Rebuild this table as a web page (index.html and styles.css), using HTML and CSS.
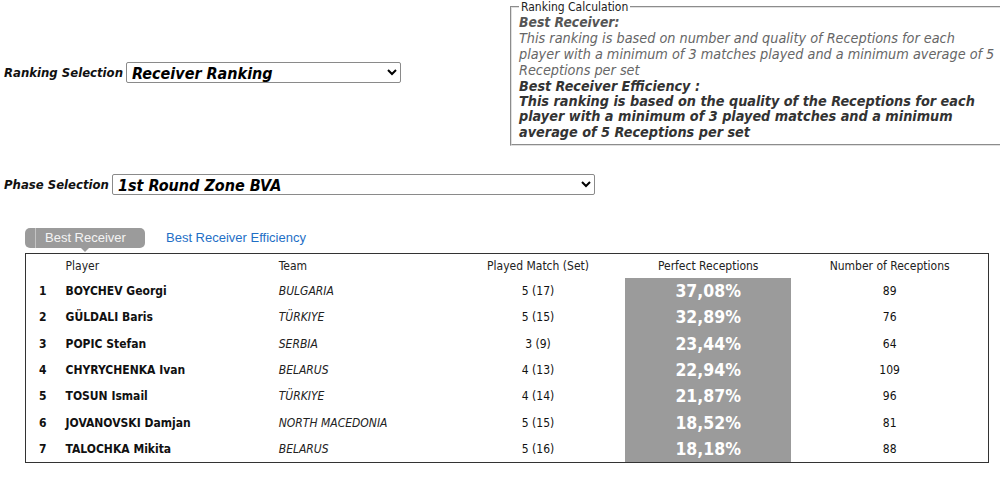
FILE: index.html
```html
<!DOCTYPE html>
<html>
<head>
<meta charset="utf-8">
<link rel="stylesheet" href="styles.css">
</head>
<body>
<div class="page">
  <div class="top">
    <div class="sel-row ranking">
      <label class="sel-label">Ranking Selection</label>
      <select class="sel sel-ranking"><option>Receiver Ranking</option></select>
    </div>
    <fieldset class="calc">
      <legend>Ranking Calculation</legend>
      <div class="c-title">Best Receiver:</div>
      <div class="c-desc">This ranking is based on number and quality of Receptions for each<br>player with a minimum of 3 matches played and a minimum average of 5<br>Receptions per set</div>
      <div class="c-title2">Best Receiver Efficiency :</div>
      <div class="c-desc2">This ranking is based on the quality of the Receptions for each<br>player with a minimum of 3 played matches and a minimum<br>average of 5 Receptions per set</div>
    </fieldset>
  </div>

  <div class="sel-row phase">
    <label class="sel-label">Phase Selection</label>
    <select class="sel sel-phase"><option>1st Round Zone BVA</option></select>
  </div>

  <div class="tabs">
    <span class="tab active"><span class="tab-line"></span><span class="tab-text">Best Receiver</span></span>
    <a class="tab-link" href="#">Best Receiver Efficiency</a>
  </div>

  <table class="rank">
    <colgroup>
      <col class="c1"><col class="c2"><col class="c3"><col class="c4"><col class="c5"><col class="c6">
    </colgroup>
    <thead>
      <tr>
        <th></th>
        <th class="l">Player</th>
        <th class="l">Team</th>
        <th>Played Match (Set)</th>
        <th>Perfect Receptions</th>
        <th>Number of Receptions</th>
      </tr>
    </thead>
    <tbody>
      <tr><td class="pos">1</td><td class="name">BOYCHEV Georgi</td><td class="team">BULGARIA</td><td class="num">5 (17)</td><td class="pct">37,08%</td><td class="num">89</td></tr>
      <tr><td class="pos">2</td><td class="name">GÜLDALI Baris</td><td class="team">TÜRKIYE</td><td class="num">5 (15)</td><td class="pct">32,89%</td><td class="num">76</td></tr>
      <tr><td class="pos">3</td><td class="name">POPIC Stefan</td><td class="team">SERBIA</td><td class="num">3 (9)</td><td class="pct">23,44%</td><td class="num">64</td></tr>
      <tr><td class="pos">4</td><td class="name">CHYRYCHENKA Ivan</td><td class="team">BELARUS</td><td class="num">4 (13)</td><td class="pct">22,94%</td><td class="num">109</td></tr>
      <tr><td class="pos">5</td><td class="name">TOSUN Ismail</td><td class="team">TÜRKIYE</td><td class="num">4 (14)</td><td class="pct">21,87%</td><td class="num">96</td></tr>
      <tr><td class="pos">6</td><td class="name">JOVANOVSKI Damjan</td><td class="team">NORTH MACEDONIA</td><td class="num">5 (15)</td><td class="pct">18,52%</td><td class="num">81</td></tr>
      <tr><td class="pos">7</td><td class="name">TALOCHKA Mikita</td><td class="team">BELARUS</td><td class="num">5 (16)</td><td class="pct">18,18%</td><td class="num">88</td></tr>
    </tbody>
  </table>
</div>
</body>
</html>
```
FILE: styles.css
```css
html, body {
  margin: 0;
  padding: 0;
  background: #fff;
  overflow: hidden;
}
body {
  font-family: "DejaVu Sans Condensed", "DejaVu Sans", sans-serif;
  font-stretch: condensed;
  color: #222;
  font-size: 12px;
}
.page {
  padding-left: 4px;
}
.top {
  display: flex;
  align-items: center;
}
.top .ranking {
  width: 506px;
  flex: none;
}
.sel-row {
  display: flex;
  align-items: center;
}
.sel-label {
  font-weight: bold;
  font-style: italic;
  font-size: 13px;
  color: #111;
  margin-right: 3px;
}
.sel {
  font-family: inherit;
  font-stretch: condensed;
  font-weight: bold;
  font-style: italic;
  font-size: 16px;
  color: #000;
  height: 21px;
  border: 1px solid #8a8a8a;
  border-radius: 2px;
  background: #fff;
  padding: 0 1px;
  margin: 0;
}
.sel-ranking { width: 275px; }
.sel-phase { width: 483px; }
.calc {
  flex: 1;
  min-width: 0;
  margin: 0;
  padding: 0 0 4px 7px;
  border: 2px groove #e0e0e0;
  border-right: none;
  white-space: nowrap;
  overflow: hidden;
}
.calc legend {
  font-size: 12px;
  color: #222;
  padding: 0 2px;
  margin-left: 0;
}
.calc div {
  font-style: italic;
  font-size: 13.8px;
  line-height: 16px;
}
.c-title { font-weight: bold; color: #555; }
.calc .c-desc { color: #666; font-size: 14.3px; }
.calc .c-title2 { font-weight: bold; color: #333; font-size: 14.2px; }
.calc .c-desc2 {
  font-weight: bold;
  color: #333;
  font-size: 14.3px;
  line-height: 15.3px;
}
.phase {
  margin-top: 28px;
}
.tabs {
  display: flex;
  align-items: center;
  margin: 33px 0 0 21px;
  height: 20px;
}
.tab {
  position: relative;
  display: flex;
  align-items: center;
  width: 120px;
  height: 20px;
  background: #9b9b9b;
  border-radius: 5px;
  font-family: "Liberation Sans", Arial, sans-serif;
  font-stretch: normal;
  font-size: 13px;
  color: #f4f4f4;
}
.tab-line {
  width: 1px;
  height: 20px;
  background: #c4c4c4;
  margin-left: 10px;
  margin-right: 9px;
}
.tab::after {
  content: "";
  position: absolute;
  left: 56px;
  bottom: -4px;
  border-left: 4px solid transparent;
  border-right: 4px solid transparent;
  border-top: 4px solid #9b9b9b;
}
.tab-link {
  margin-left: 21px;
  font-family: "Liberation Sans", Arial, sans-serif;
  font-stretch: normal;
  font-size: 13px;
  color: #1f6fc6;
  text-decoration: none;
}
.rank {
  margin: 5px 0 0 21px;
  width: 964px;
  border-collapse: collapse;
  border: 1px solid #333;
  table-layout: fixed;
}
.c1 { width: 40px; }
.c2 { width: 213px; }
.c3 { width: 172px; }
.c4 { width: 174px; }
.c5 { width: 166px; }
.c6 { width: 197px; }
.rank th {
  font-weight: normal;
  font-size: 12px;
  color: #222;
  height: 24px;
  padding: 0;
  text-align: center;
}
.rank th.l { text-align: left; }
.rank td {
  height: 26.3px;
  padding: 0;
  font-size: 12px;
  color: #111;
}
.rank td.pos {
  font-weight: bold;
  padding-left: 13px;
}
.rank td.name { font-weight: bold; }
.rank td.team { font-style: italic; color: #222; }
.rank td.num { text-align: center; }
.rank td.pct {
  background: #9b9b9b;
  color: #fff;
  font-weight: bold;
  font-size: 17.5px;
  text-align: center;
}
```
